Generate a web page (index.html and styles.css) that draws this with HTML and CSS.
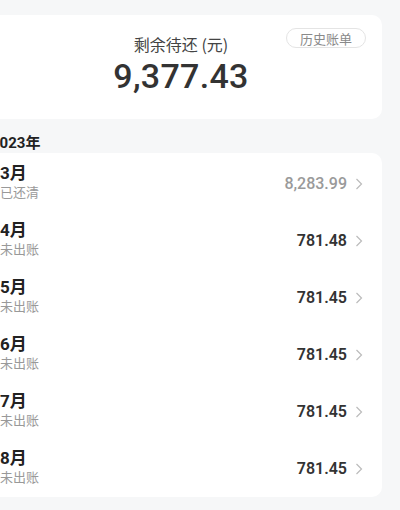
FILE: index.html
```html
<!DOCTYPE html>
<html lang="zh">
<head>
<meta charset="utf-8">
<link rel="stylesheet" href="styles.css">
</head>
<body>
<div class="page">
  <section class="summary">
    <div class="summary-title">剩余待还 (元)</div>
    <div class="summary-amount">9,377.43</div>
    <div class="history">历史账单</div>
  </section>
  <div class="year">2023年</div>
  <section class="list">
    <div class="row">
      <div class="info"><div class="month">3月</div><div class="status">已还清</div></div>
      <div class="amount paid">8,283.99<svg class="chev" viewBox="0 0 8 12"><polyline points="1.5,1 6.5,6 1.5,11"/></svg></div>
    </div>
    <div class="row">
      <div class="info"><div class="month">4月</div><div class="status">未出账</div></div>
      <div class="amount">781.48<svg class="chev" viewBox="0 0 8 12"><polyline points="1.5,1 6.5,6 1.5,11"/></svg></div>
    </div>
    <div class="row">
      <div class="info"><div class="month">5月</div><div class="status">未出账</div></div>
      <div class="amount">781.45<svg class="chev" viewBox="0 0 8 12"><polyline points="1.5,1 6.5,6 1.5,11"/></svg></div>
    </div>
    <div class="row">
      <div class="info"><div class="month">6月</div><div class="status">未出账</div></div>
      <div class="amount">781.45<svg class="chev" viewBox="0 0 8 12"><polyline points="1.5,1 6.5,6 1.5,11"/></svg></div>
    </div>
    <div class="row">
      <div class="info"><div class="month">7月</div><div class="status">未出账</div></div>
      <div class="amount">781.45<svg class="chev" viewBox="0 0 8 12"><polyline points="1.5,1 6.5,6 1.5,11"/></svg></div>
    </div>
    <div class="row">
      <div class="info"><div class="month">8月</div><div class="status">未出账</div></div>
      <div class="amount">781.45<svg class="chev" viewBox="0 0 8 12"><polyline points="1.5,1 6.5,6 1.5,11"/></svg></div>
    </div>
  </section>
</div>
</body>
</html>
```
FILE: styles.css
```css
html, body {
  margin: 0;
  padding: 0;
}
body {
  background: #f6f7f8;
  font-family: "Roboto", "Noto Sans CJK SC", sans-serif;
  color: #222;
  overflow: hidden;
  height: 510px;
}
.page {
  margin-left: -20px;
  width: 402px;
  padding-top: 15px;
}
.summary {
  position: relative;
  background: #fff;
  border-radius: 10px;
  height: 104px;
  box-sizing: border-box;
  padding-top: 19px;
  text-align: center;
}
.summary-title {
  font-family: "Noto Sans CJK SC", sans-serif;
  font-size: 16px;
  line-height: 20px;
  color: #444;
}
.summary-amount {
  margin-top: 2px;
  font-family: "Roboto", sans-serif;
  font-weight: 500;
  font-size: 34px;
  line-height: 40px;
  color: #333;
  letter-spacing: 0.3px;
}
.history {
  position: absolute;
  top: 13px;
  right: 16px;
  height: 20px;
  line-height: 19px;
  box-sizing: border-box;
  padding: 0 13px;
  border: 1px solid #e4e4e4;
  border-radius: 10px;
  font-family: "Noto Sans CJK SC", sans-serif;
  font-size: 13px;
  color: #8a8a8a;
}
.year {
  margin-top: 14px;
  padding-left: 11px;
  font-family: "Roboto", "Noto Sans CJK SC", sans-serif;
  font-weight: 700;
  font-size: 15px;
  line-height: 20px;
  color: #222;
}
.list {
  background: #fff;
  border-radius: 10px;
  padding: 2px 19px 0 20px;
  height: 344px;
  box-sizing: border-box;
}
.row {
  height: 57px;
  display: flex;
  align-items: center;
  justify-content: space-between;
}
.info {
  display: flex;
  flex-direction: column;
  margin-top: -3px;
}
.month {
  font-family: "Roboto", "Noto Sans CJK SC", sans-serif;
  font-weight: 700;
  font-size: 17px;
  line-height: 19px;
  color: #222;
}
.status {
  font-family: "Noto Sans CJK SC", sans-serif;
  font-size: 13px;
  line-height: 17px;
  color: #999;
}
.amount {
  display: flex;
  align-items: center;
  font-family: "Roboto", sans-serif;
  font-weight: 600;
  font-size: 16px;
  color: #333;
}
.amount.paid {
  color: #9a9a9a;
  font-weight: 500;
}
.chev {
  width: 8px;
  height: 12px;
  margin-left: 8px;
  fill: none;
  stroke: #bbb;
  stroke-width: 1.2;
}
```
